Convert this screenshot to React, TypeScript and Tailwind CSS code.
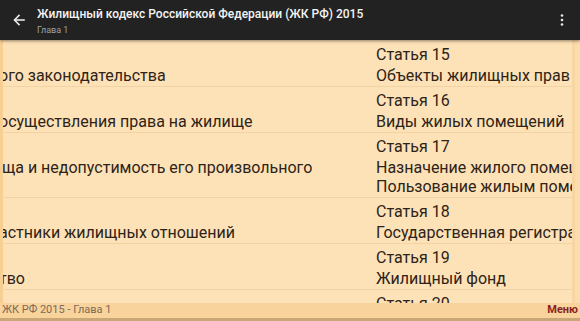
import React from 'react';

type Row = {
  left: string;
  leftShift: string;
  label: string;
  title: string[];
};

const rows: Row[] = [
  { left: 'ого законодательства', leftShift: '-ml-[4px]', label: 'Статья 15', title: ['Объекты жилищных прав'] },
  { left: 'осуществления права на жилище', leftShift: '-ml-[4px]', label: 'Статья 16', title: ['Виды жилых помещений'] },
  {
    left: 'ща и недопустимость его произвольного',
    leftShift: '-ml-[1px]',
    label: 'Статья 17',
    title: ['Назначение жилого помещения и пределы его использования.', 'Пользование жилым помещением'],
  },
  { left: 'астники жилищных отношений', leftShift: '-ml-[4px]', label: 'Статья 18', title: ['Государственная регистрация прав на жилые помещения'] },
  { left: 'тво', leftShift: '-ml-[4px]', label: 'Статья 19', title: ['Жилищный фонд'] },
  { left: '', leftShift: '', label: 'Статья 20', title: [] },
];

const App: React.FC = () => {
  return (
    <div className="w-[580px] h-[321px] flex flex-col overflow-hidden bg-[#fde2b7] font-['Roboto',sans-serif]">
      {/* Toolbar */}
      <div className="relative z-10 h-[40px] shrink-0 flex items-center bg-[#222222] shadow-[0_1px_3px_rgba(0,0,0,0.45)]">
        <div className="w-[37px] flex justify-center pl-[1px]">
          <svg width="12" height="12" viewBox="0 0 12 12" fill="none" stroke="#e8e8e8" strokeWidth="1.6" strokeLinecap="square">
            <path d="M11 6H2" />
            <path d="M6 1.5L1.5 6L6 10.5" />
          </svg>
        </div>
        <div className="flex-1 min-w-0 flex flex-col mt-[2px]">
          <div className="text-[12px] leading-[16px] font-medium text-[#f4f4f4] whitespace-nowrap">
            Жилищный кодекс Российской Федерации (ЖК РФ) 2015
          </div>
          <div className="text-[9px] leading-[12px] text-[#a0a0a0] mt-[2px]">Глава 1</div>
        </div>
        <div className="w-[36px] flex justify-center">
          <svg width="4" height="12" viewBox="0 0 4 12" fill="#e8e8e8">
            <circle cx="2" cy="1.5" r="1.3" />
            <circle cx="2" cy="6" r="1.3" />
            <circle cx="2" cy="10.5" r="1.3" />
          </svg>
        </div>
      </div>

      {/* Content */}
      <div className="h-[263px] shrink-0 flex overflow-hidden">
        <div className="w-[3px] bg-[#f7cf93]" />
        <div className="flex-1 min-w-0 overflow-hidden pt-[1px]">
          {rows.map((r, i) => (
            <div key={i} className="flex border-b border-[#f2d3a5] text-[#2e2318] text-[16px]">
              <div className="w-[373px] shrink-0 overflow-hidden pt-[3px] pb-[1px]">
                <div className="h-[22px]" />
                <div className={`leading-[19px] whitespace-nowrap ${r.leftShift}`}>{r.left}</div>
              </div>
              <div className="flex-1 min-w-0 overflow-hidden pt-[3px] pb-[1px] whitespace-nowrap">
                <div className="leading-[22px]">{r.label}</div>
                {r.title.map((t, j) => (
                  <div key={j} className="leading-[19px]">{t}</div>
                ))}
              </div>
            </div>
          ))}
        </div>
        <div className="w-[8px] bg-[#fbdcab] border-l-[3px] border-[#f8d6a3]" />
      </div>

      {/* Footer */}
      <div className="h-[18px] shrink-0 flex items-center justify-between px-[2px] bg-[#f8d49c] border-b-[3px] border-[#c9a676]">
        <span className="text-[11px] text-[#7d6b58]">ЖК РФ 2015 - Глава 1</span>
        <span className="text-[11px] font-bold text-[#8a1e22]">Меню</span>
      </div>
    </div>
  );
};

export default App;
